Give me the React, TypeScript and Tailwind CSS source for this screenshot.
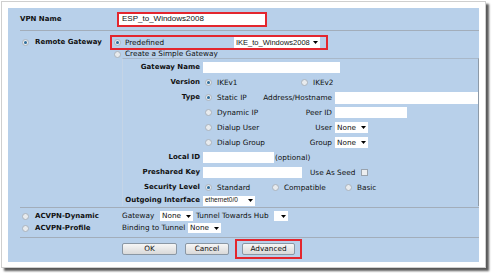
import React from "react";

function Radio({ on }: { on?: boolean }) {
  return (
    <span className="inline-flex w-[7px] h-[7px] shrink-0 items-center justify-center rounded-full border border-[#aab3bd] bg-[#e8ebee]">
      {on && <span className="w-[3px] h-[3px] rounded-full bg-[#2d6c9c]" />}
    </span>
  );
}

function Tri() {
  return (
    <svg width="5" height="3" viewBox="0 0 5 3" className="shrink-0">
      <path d="M0 0h5L2.5 3z" fill="#000" />
    </svg>
  );
}

function Sel({ text, className }: { text: string; className: string }) {
  return (
    <div className={"flex items-center justify-between bg-white px-[2px] " + className}>
      <span className="leading-none">{text}</span>
      <Tri />
    </div>
  );
}

function Opt({ on, label, className }: { on?: boolean; label: string; className?: string }) {
  return (
    <div className={"flex items-center " + (className ?? "")}>
      <Radio on={on} />
      <span className="ml-[5px] leading-none">{label}</span>
    </div>
  );
}

function Lbl({ children }: { children: React.ReactNode }) {
  return <div className="w-[77px] shrink-0 text-right font-bold text-[7px] leading-none">{children}</div>;
}

function Btn({ label, className }: { label: string; className: string }) {
  return (
    <div
      className={
        "flex h-[12px] items-center justify-center rounded-[2px] border border-[#8a97a4] bg-gradient-to-b from-[#f6f6f6] to-[#d9d9d9] leading-none " +
        className
      }
    >
      {label}
    </div>
  );
}

export default function App() {
  return (
    <div className="w-[492px] h-[273px] bg-white font-['DejaVu_Sans',sans-serif] text-[7.3px] text-[#111]">
      <div className="ml-[1px] mt-[1px] w-[485px] h-[267px] border border-[#cfcfcf] bg-white p-[6px] shadow-[3px_3px_2px_rgba(0,0,0,0.65)]">
        <div className="w-[471px] h-[254px] bg-[#b8d0ea] flex flex-col">
          {/* VPN Name */}
          <div className="flex h-[22px] items-center">
            <div className="w-[109px] pl-[12px] font-bold text-[7px] leading-none">VPN Name</div>
            <div className="flex h-[15px] w-[150px] items-center border-2 border-[#e3262e] bg-white pl-[3px] font-['Liberation_Sans',sans-serif] text-[8px] leading-none">
              ESP_to_Windows2008
            </div>
          </div>
          <div className="ml-[12px] h-[1px] bg-[#a2adba]" />

          {/* Remote Gateway */}
          <div className="flex h-[176px]">
            <div className="w-[102px] shrink-0">
              <div className="mt-[4px] flex h-[15px] items-center pl-[14px]">
                <Radio on />
                <span className="ml-[6px] font-bold text-[7px] leading-none">Remote Gateway</span>
              </div>
            </div>
            <div className="flex flex-1 flex-col">
              <div className="mt-[4px] flex h-[15px] w-[218px] items-center border-2 border-[#e3262e] pl-[2px] pr-[6px]">
                <Radio on />
                <span className="ml-[4px] leading-none">Predefined</span>
                <div className="ml-auto flex h-[11px] w-[86px] items-center justify-between bg-white px-[2px] font-['Liberation_Sans',sans-serif] text-[7.5px]">
                  <span className="leading-none">IKE_to_Windows2008</span>
                  <Tri />
                </div>
              </div>
              <div className="flex h-[8px] items-center pl-[4px]">
                <Radio />
                <span className="ml-[4px] leading-none">Create a Simple Gateway</span>
              </div>
              <div className="ml-[12px] flex h-[148px] flex-col border-l border-t border-r border-l-[#c4d4e6] border-t-[#a9b8c9] border-r-[#8d9aa8] pt-[1px]">
                <div className="flex h-[15px] items-center">
                  <Lbl>Gateway Name</Lbl>
                  <div className="ml-[3px] h-[11px] w-[137px] bg-white" />
                </div>
                <div className="flex h-[15px] items-center">
                  <Lbl>Version</Lbl>
                  <div className="ml-[3px] flex items-center pl-[2px]">
                    <Opt on label="IKEv1" className="w-[96px]" />
                    <Opt label="IKEv2" />
                  </div>
                </div>
                <div className="flex h-[15px] items-center">
                  <Lbl>Type</Lbl>
                  <div className="ml-[3px] flex w-[129px] items-center justify-between pl-[2px]">
                    <Opt on label="Static IP" />
                    <span className="leading-none">Address/Hostname</span>
                  </div>
                  <div className="ml-[3px] h-[12px] flex-1 bg-white" />
                </div>
                <div className="flex h-[15px] items-center">
                  <div className="w-[77px]" />
                  <div className="ml-[3px] flex w-[129px] items-center justify-between pl-[2px]">
                    <Opt label="Dynamic IP" />
                    <span className="leading-none">Peer ID</span>
                  </div>
                  <div className="ml-[3px] h-[11px] w-[72px] bg-white" />
                </div>
                <div className="flex h-[15px] items-center">
                  <div className="w-[77px]" />
                  <div className="ml-[3px] flex w-[129px] items-center justify-between pl-[2px]">
                    <Opt label="Dialup User" />
                    <span className="leading-none">User</span>
                  </div>
                  <Sel text="None" className="ml-[3px] h-[11px] w-[33px]" />
                </div>
                <div className="flex h-[15px] items-center">
                  <div className="w-[77px]" />
                  <div className="ml-[3px] flex w-[129px] items-center justify-between pl-[2px]">
                    <Opt label="Dialup Group" />
                    <span className="leading-none">Group</span>
                  </div>
                  <Sel text="None" className="ml-[3px] h-[11px] w-[33px]" />
                </div>
                <div className="flex h-[15px] items-center">
                  <Lbl>Local ID</Lbl>
                  <div className="ml-[3px] h-[11px] w-[71px] bg-white" />
                  <span className="ml-[1px] leading-none">(optional)</span>
                </div>
                <div className="flex h-[15px] items-center">
                  <Lbl>Preshared Key</Lbl>
                  <div className="ml-[3px] h-[11px] w-[99px] bg-white" />
                  <span className="ml-[8px] leading-none">Use As Seed</span>
                  <span className="ml-[6px] h-[7px] w-[7px] border border-[#9aa3ad] bg-[#eceef0]" />
                </div>
                <div className="flex h-[15px] items-center">
                  <Lbl>Security Level</Lbl>
                  <div className="ml-[3px] flex items-center pl-[2px]">
                    <Opt on label="Standard" className="w-[67px]" />
                    <Opt label="Compatible" className="w-[73px]" />
                    <Opt label="Basic" />
                  </div>
                </div>
                <div className="flex h-[11px] items-center">
                  <Lbl>Outgoing Interface</Lbl>
                  <div className="ml-[3px] flex h-[10px] w-[52px] items-center justify-between bg-white px-[2px] font-['Liberation_Sans',sans-serif] text-[6.5px]">
                    <span className="leading-none">ethernet0/0</span>
                    <Tri />
                  </div>
                </div>
              </div>
            </div>
          </div>
          <div className="ml-[12px] h-[1px] bg-[#a2adba]" />

          {/* ACVPN */}
          <div className="flex h-[29px] flex-col pt-[2px]">
            <div className="flex h-[12px] items-center">
              <div className="flex w-[114px] items-center pl-[14px]">
                <Radio />
                <span className="ml-[6px] font-bold text-[7px] leading-none">ACVPN-Dynamic</span>
              </div>
              <span className="w-[38px] leading-none">Gateway</span>
              <Sel text="None" className="h-[10px] w-[33px]" />
              <span className="ml-[3px] w-[78px] leading-none">Tunnel Towards Hub</span>
              <div className="flex h-[10px] w-[14px] items-center justify-end bg-white px-[2px]">
                <Tri />
              </div>
            </div>
            <div className="flex h-[12px] items-center">
              <div className="flex w-[114px] items-center pl-[14px]">
                <Radio />
                <span className="ml-[6px] font-bold text-[7px] leading-none">ACVPN-Profile</span>
              </div>
              <span className="w-[66px] leading-none">Binding to Tunnel</span>
              <Sel text="None" className="h-[10px] w-[33px]" />
            </div>
          </div>
          <div className="ml-[12px] h-[1px] bg-[#a2adba]" />

          {/* Buttons */}
          <div className="mt-[1px] flex h-[20px] items-center pl-[114px]">
            <Btn label="OK" className="w-[55px]" />
            <Btn label="Cancel" className="ml-[8px] w-[44px]" />
            <div className="ml-[6px] flex h-[20px] w-[67px] items-center border-2 border-[#e3262e] pl-[5px]">
              <Btn label="Advanced" className="w-[53px]" />
            </div>
          </div>
        </div>
      </div>
    </div>
  );
}
